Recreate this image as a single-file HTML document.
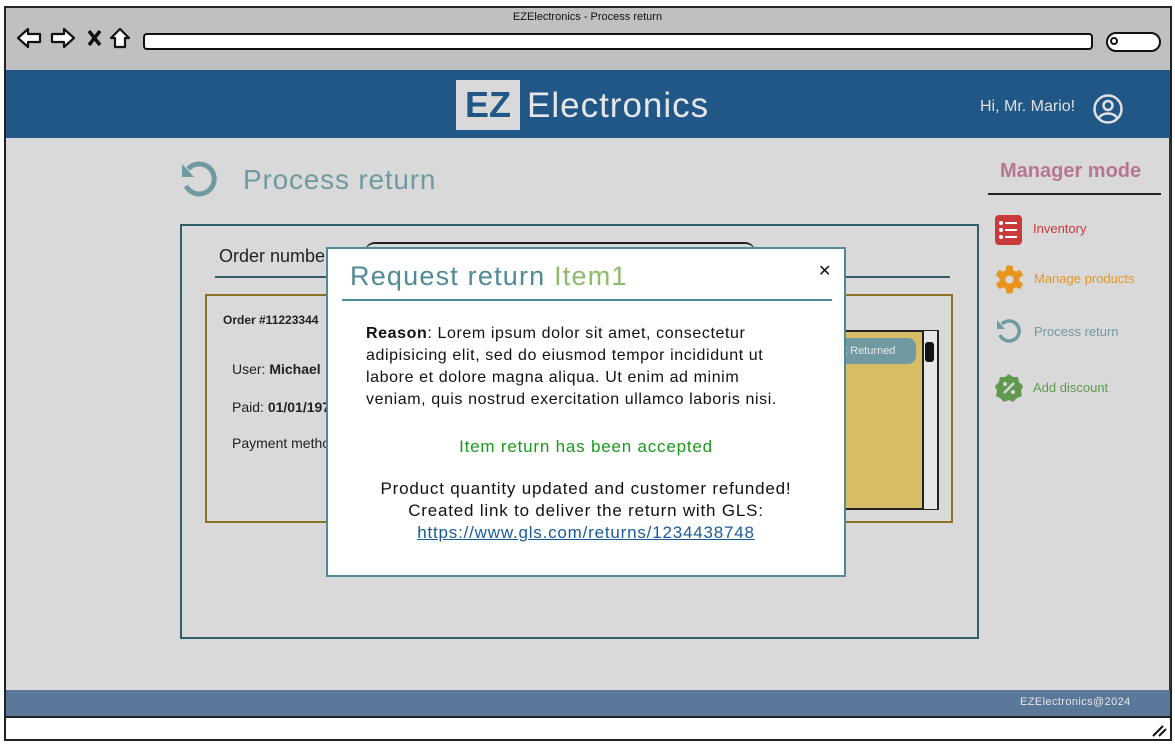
<!DOCTYPE html>
<html><head><meta charset="utf-8"><style>
*{margin:0;padding:0;box-sizing:border-box}
body{width:1175px;height:744px;background:#fff;font-family:"Liberation Sans",sans-serif;position:relative;overflow:hidden}
.abs{position:absolute}
</style></head><body>
<div class="abs" style="left:4px;top:6px;width:1168px;height:735px;border:2px solid #222;background:#c0c0c0"></div>
<div class="abs" style="left:0;top:11px;width:1175px;text-align:center;font-size:11px;color:#111">EZElectronics - Process return</div>
<svg class="abs" style="left:14px;top:24px" width="120" height="28" viewBox="0 0 120 28">
<path d="M4 14 L14 5 L14 10 L26 10 L26 18 L14 18 L14 23 Z" fill="#fff" stroke="#111" stroke-width="2.2" stroke-linejoin="round"/>
<path d="M60 14 L50 5 L50 10 L38 10 L38 18 L50 18 L50 23 Z" fill="#fff" stroke="#111" stroke-width="2.2" stroke-linejoin="round"/>
<path d="M75 7 L86 21 M86 7 L75 21" stroke="#111" stroke-width="3.5"/>
<path d="M106 5 L97 14 L101 14 L101 23 L111 23 L111 14 L115 14 Z" fill="#fff" stroke="#111" stroke-width="2.2" stroke-linejoin="round"/>
</svg>
<div class="abs" style="left:143px;top:33px;width:950px;height:17px;border:2px solid #111;border-radius:4px;background:#fff"></div>
<div class="abs" style="left:1106px;top:32px;width:55px;height:20px;border:2px solid #111;border-radius:10px;background:#fff"></div>
<div class="abs" style="left:1110px;top:37px;width:8px;height:8px;border:2px solid #111;border-radius:50%"></div>
<div class="abs" style="left:6px;top:70px;width:1164px;height:68px;background:#215787"></div>
<div class="abs" style="left:456px;top:80px;width:64px;height:50px;background:#d9d9d9;color:#215787;font-size:36px;font-weight:bold;text-align:center;line-height:50px">EZ</div>
<div class="abs" style="left:527px;top:84px;color:#e6e6e6;font-size:35px;letter-spacing:1px;line-height:44px">Electronics</div>
<div class="abs" style="left:980px;top:98px;color:#e0e0e0;font-size:16px">Hi, Mr. Mario!</div>
<svg class="abs" style="left:1092px;top:93px" width="32" height="32" viewBox="0 0 32 32"><circle cx="16" cy="16" r="13.5" fill="none" stroke="#e0e0e0" stroke-width="2.5"/><circle cx="16" cy="12.5" r="4.5" fill="none" stroke="#e0e0e0" stroke-width="2.5"/><path d="M7 25 C10 19 22 19 25 25" fill="none" stroke="#e0e0e0" stroke-width="2.5"/></svg>
<div class="abs" style="left:6px;top:138px;width:1164px;height:552px;background:#d9d9d9"></div>
<svg class="abs" style="left:178px;top:160px" width="44" height="42" viewBox="0 0 44 42"><path d="M10 9 A15 15 0 1 1 8 26" fill="none" stroke="#6f9aa2" stroke-width="5"/><path d="M4 4 L4 17 L16 17 Z" fill="#6f9aa2"/></svg>
<div class="abs" style="left:243px;top:164px;color:#6f9aa2;font-size:28px;letter-spacing:0.8px">Process return</div>
<div class="abs" style="left:180px;top:224px;width:799px;height:415px;border:2px solid #2f5d6a"></div>
<div class="abs" style="left:219px;top:246px;font-size:18px;color:#222">Order number</div>
<div class="abs" style="left:365px;top:242px;width:390px;height:20px;border-top:2px solid #222;border-radius:12px"></div>
<div class="abs" style="left:215px;top:276px;width:735px;height:2px;background:#2f5d6a"></div>
<div class="abs" style="left:205px;top:294px;width:748px;height:229px;border:2px solid #8a7224"></div>
<div class="abs" style="left:223px;top:313px;font-size:12px;font-weight:bold;color:#222">Order #11223344</div>
<div class="abs" style="left:232px;top:361px;font-size:14px;color:#222">User: <b>Michael</b></div>
<div class="abs" style="left:232px;top:399px;font-size:14px;color:#222">Paid: <b>01/01/1970</b></div>
<div class="abs" style="left:232px;top:435px;font-size:14px;color:#222">Payment method</div>
<div class="abs" style="left:800px;top:330px;width:139px;height:180px;border:2px solid #222;background:#d9bd66"></div>
<div class="abs" style="left:820px;top:338px;width:96px;height:26px;background:#6f9aa2;border-radius:8px;color:#e8e8e8;font-size:11px;line-height:26px;padding-left:10px">Not Returned</div>
<div class="abs" style="left:922px;top:331px;width:15px;height:178px;background:#e6e6e6;border-left:2px solid #222"></div>
<div class="abs" style="left:925px;top:342px;width:9px;height:20px;background:#111;border-radius:3px"></div>
<div class="abs" style="left:326px;top:247px;width:520px;height:330px;background:#fff;border:2px solid #4f8a96"></div>
<div class="abs" style="left:350px;top:261px;font-size:27px;letter-spacing:1.2px;color:#4f8a96">Request return <span style="color:#8dbb6a">Item1</span></div>
<div class="abs" style="left:818px;top:261px;font-size:16px;color:#111">✕</div>
<div class="abs" style="left:342px;top:299px;width:490px;height:2px;background:#4f8a96"></div>
<div class="abs" style="left:366px;top:323px;width:436px;font-size:16px;letter-spacing:0.6px;line-height:22px;color:#111"><b>Reason</b>: Lorem ipsum dolor sit amet, consectetur adipisicing elit, sed do eiusmod tempor incididunt ut labore et dolore magna aliqua. Ut enim ad minim veniam, quis nostrud exercitation ullamco laboris nisi.</div>
<div class="abs" style="left:328px;top:437px;width:516px;text-align:center;font-size:17px;letter-spacing:0.8px;color:#1a9a1a">Item return has been accepted</div>
<div class="abs" style="left:328px;top:478px;width:516px;text-align:center;font-size:17px;letter-spacing:0.8px;line-height:22px;color:#111">Product quantity updated and customer refunded!<br>Created link to deliver the return with GLS:<br><span style="color:#1a5a9a;text-decoration:underline">https://www.gls.com/returns/1234438748</span></div>
<div class="abs" style="left:1000px;top:160px;font-size:20px;font-weight:bold;color:#b87593">Manager mode</div>
<div class="abs" style="left:988px;top:193px;width:173px;height:2px;background:#222"></div>
<svg class="abs" style="left:995px;top:215px" width="27" height="30" viewBox="0 0 27 30"><rect x="0" y="0" width="27" height="30" rx="4" fill="#c93a3a"/><g fill="#fff"><circle cx="6" cy="8" r="2"/><circle cx="6" cy="15" r="2"/><circle cx="6" cy="22" r="2"/><rect x="10" y="7" width="12" height="2"/><rect x="10" y="14" width="12" height="2"/><rect x="10" y="21" width="12" height="2"/></g></svg>
<div class="abs" style="left:1033px;top:221px;font-size:13px;color:#c93a3a">Inventory</div>
<svg class="abs" style="left:995px;top:265px" width="29" height="29" viewBox="0 0 29 29"><g fill="#e8951f" transform="translate(14.5 14.5)"><circle r="10"/><rect x="-3.5" y="-14" width="7" height="28" rx="2"/><rect x="-3.5" y="-14" width="7" height="28" rx="2" transform="rotate(60)"/><rect x="-3.5" y="-14" width="7" height="28" rx="2" transform="rotate(120)"/><circle r="4" fill="#d9d9d9"/></g></svg>
<div class="abs" style="left:1034px;top:271px;font-size:13px;color:#e8951f">Manage products</div>
<svg class="abs" style="left:995px;top:318px" width="28" height="28" viewBox="0 0 28 28"><path d="M7 6 A10 10 0 1 1 5 17" fill="none" stroke="#6f9aa2" stroke-width="3.5"/><path d="M2 2 L2 11 L10 11 Z" fill="#6f9aa2"/></svg>
<div class="abs" style="left:1034px;top:324px;font-size:13px;color:#6f9aa2">Process return</div>
<svg class="abs" style="left:994px;top:373px" width="30" height="30" viewBox="0 0 30 30"><path d="M15 1 L19 4 L24 4 L25 9 L29 13 L27 18 L28 23 L23 25 L19 29 L15 27 L10 29 L6 25 L2 23 L3 18 L1 13 L5 9 L6 4 L11 4 Z" fill="#5f9a4f"/><path d="M10 20 L20 10" stroke="#d9d9d9" stroke-width="2.5"/><circle cx="11" cy="11" r="2" fill="#d9d9d9"/><circle cx="19" cy="19" r="2" fill="#d9d9d9"/></svg>
<div class="abs" style="left:1033px;top:380px;font-size:13px;color:#5f9a4f">Add discount</div>
<div class="abs" style="left:1169px;top:138px;width:2px;height:552px;background:#333"></div>
<div class="abs" style="left:6px;top:690px;width:1164px;height:26px;background:#5a7899"></div>
<div class="abs" style="left:1020px;top:696px;font-size:11px;letter-spacing:0.4px;color:#e6e6e6">EZElectronics@2024</div>
<div class="abs" style="left:6px;top:716px;width:1164px;height:23px;background:#fff;border-top:2px solid #222"></div>
<svg class="abs" style="left:1150px;top:722px" width="18" height="16"><path d="M3 14 L13 4 M9 14 L16 7" stroke="#111" stroke-width="2"/></svg>
</body></html>
